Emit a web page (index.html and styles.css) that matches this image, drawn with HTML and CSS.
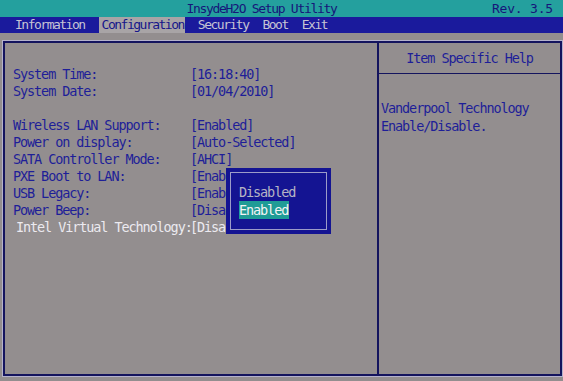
FILE: index.html
```html
<!DOCTYPE html>
<html>
<head>
  <title>InsydeH2O Setup Utility</title>
  <link rel="stylesheet" href="styles.css">
</head>
<body>
  <div class="titlebar">
    <span class="title">InsydeH2O Setup Utility</span>
    <span class="rev">Rev. 3.5</span>
  </div>
  <div class="menubar">
    <span class="menu-item">Information</span>
    <span class="menu-item active">Configuration</span>
    <span class="menu-item">Security</span>
    <span class="menu-item">Boot</span>
    <span class="menu-item">Exit</span>
  </div>
  <div class="panel">
    <div class="settings">
      <div class="row"><span class="label">System Time:</span><span class="value">[16:18:40]</span></div>
      <div class="row"><span class="label">System Date:</span><span class="value">[01/04/2010]</span></div>
      <div class="row"></div>
      <div class="row"><span class="label">Wireless LAN Support:</span><span class="value">[Enabled]</span></div>
      <div class="row"><span class="label">Power on display:</span><span class="value">[Auto-Selected]</span></div>
      <div class="row"><span class="label">SATA Controller Mode:</span><span class="value">[AHCI]</span></div>
      <div class="row"><span class="label">PXE Boot to LAN:</span><span class="value">[Enabled]</span></div>
      <div class="row"><span class="label">USB Legacy:</span><span class="value">[Enabled]</span></div>
      <div class="row"><span class="label">Power Beep:</span><span class="value">[Disabled]</span></div>
      <div class="row selected"><span class="label">Intel Virtual Technology:</span><span class="value">[Disabled]</span></div>

      <div class="popup">
        <div class="popup-inner">
          <div class="option">Disabled</div>
          <div class="option current">Enabled</div>
        </div>
      </div>
    </div>
    <div class="help">
      <div class="help-title">Item Specific Help</div>
      <div class="help-text">
        <div>Vanderpool Technology</div>
        <div>Enable/Disable.</div>
      </div>
    </div>
  </div>
</body>
</html>
```

FILE: styles.css
```css
body {
  margin: 0;
  background-color: #938e8f;
  font-family: "DejaVu Sans Mono", "Liberation Mono", monospace;
  font-size: 13.5px;
  letter-spacing: -1.1px;
  color: #1e1e98;
  width: 563px;
  height: 381px;
  overflow: hidden;
  white-space: nowrap;
}
.titlebar {
  position: relative;
  height: 17px;
  background-color: #24a09e;
  color: #16167a;
  text-align: center;
  line-height: 17px;
  font-size: 13px;
  letter-spacing: -1.3px;
}
.title {
  display: inline-block;
  margin-left: -40px;
}
.rev {
  position: absolute;
  right: 10px;
  top: 0;
  letter-spacing: -0.2px;
}
.menubar {
  display: flex;
  height: 16px;
  line-height: 16px;
  background-color: #1a1a9c;
  padding-left: 15px;
  font-size: 13px;
  letter-spacing: -1.5px;
}
.menu-item {
  color: #c6c4d4;
  margin-right: 14px;
}
.menu-item:first-child {
  margin-right: 14px;
}
.menu-item.active {
  background-color: #a8a4a6;
  color: #16168a;
  padding: 0 1px 0 3px;
  margin-right: 13px;
}
.panel {
  display: flex;
  margin: 8px 1px 0 3px;
  height: 331px;
  border: 2px solid #14145e;
  box-shadow: 0 0 0 1px #b4b2cc;
}
.settings {
  position: relative;
  flex-shrink: 0;
  width: 364px;
  padding: 23px 0 0 8px;
  border-right: 2px solid #14145e;
}
.row {
  display: flex;
  height: 17px;
  line-height: 17px;
}
.label {
  flex-shrink: 0;
  width: 177px;
}
.row.selected {
  color: #eceaf0;
  padding-left: 3px;
}
.row.selected .label {
  width: 174px;
}
.popup {
  position: absolute;
  left: 221px;
  top: 125px;
  width: 105px;
  height: 66px;
  background-color: #141492;
  padding: 4px 4px;
  box-sizing: border-box;
}
.popup-inner {
  height: 100%;
  border: 1px solid #9c9cc8;
  box-sizing: border-box;
  padding: 10px 0 0 8px;
}
.option {
  color: #b6b4c4;
  height: 18px;
  line-height: 18px;
}
.option.current {
  display: inline-block;
  background-color: #1f9c96;
  color: #f4f4f4;
  padding-right: 1px;
}
.help {
  flex: 1;
}
.help-title {
  height: 30px;
  line-height: 30px;
  text-align: center;
  border-bottom: 1px solid #14145e;
}
.help-text {
  padding: 25px 0 0 2px;
  line-height: 18px;
}
```
